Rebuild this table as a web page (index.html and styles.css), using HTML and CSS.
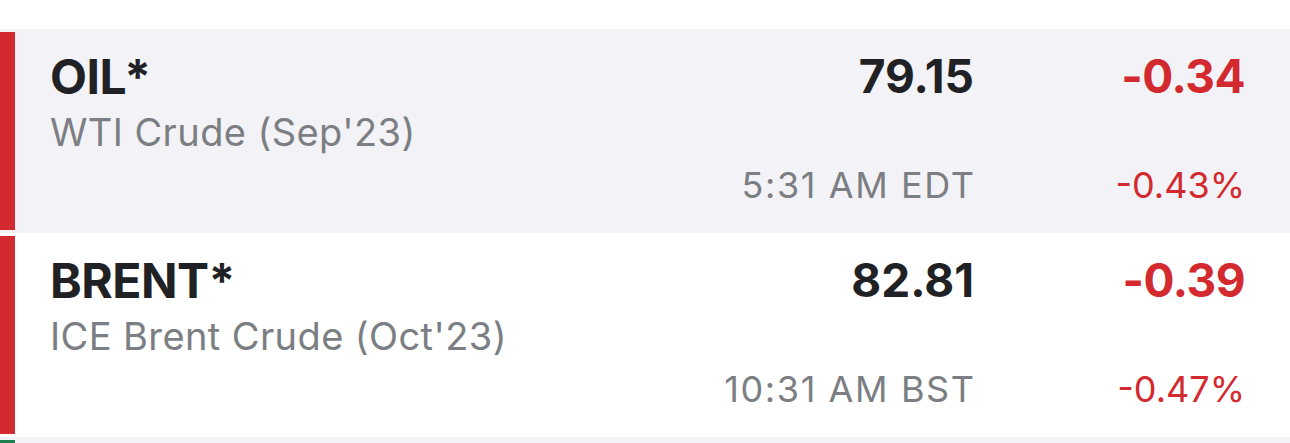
FILE: index.html
```html
<!DOCTYPE html>
<html>
<head>
<meta charset="utf-8">
<link rel="stylesheet" href="styles.css">
</head>
<body>
<div class="list">
  <div class="quote shaded">
    <div class="bar down"></div>
    <div class="body">
      <div class="names">
        <div class="sym">OIL*</div>
        <div class="desc">WTI Crude (Sep'23)</div>
      </div>
      <div class="col price">
        <div class="last">79.15</div>
        <div class="time">5:31 AM EDT</div>
      </div>
      <div class="col change">
        <div class="chg">-0.34</div>
        <div class="pct">-0.43%</div>
      </div>
    </div>
  </div>
  <div class="quote">
    <div class="bar down"></div>
    <div class="body">
      <div class="names">
        <div class="sym">BRENT*</div>
        <div class="desc">ICE Brent Crude (Oct'23)</div>
      </div>
      <div class="col price">
        <div class="last">82.81</div>
        <div class="time">10:31 AM BST</div>
      </div>
      <div class="col change">
        <div class="chg">-0.39</div>
        <div class="pct">-0.47%</div>
      </div>
    </div>
  </div>
  <div class="quote shaded peek">
    <div class="bar up"></div>
  </div>
</div>
</body>
</html>
```
FILE: styles.css
```css
html, body {
  margin: 0;
  padding: 0;
  background: #ffffff;
}
body {
  font-family: Inter, "Liberation Sans", sans-serif;
  width: 1290px;
  height: 443px;
  overflow: hidden;
}
.list {
  padding-top: 29px;
}
.quote {
  display: flex;
  height: 204px;
  background: #ffffff;
}
.quote.shaded {
  background: #f3f3f7;
}
.quote.peek {
  height: 6px;
}
.bar {
  width: 15px;
  margin: 3px 0;
  flex: none;
}
.peek .bar {
  margin-bottom: 0;
}
.bar.down { background: #d22a2f; }
.bar.up { background: #1e7f4e; }
.body {
  flex: 1;
  display: flex;
  padding: 24px 45px 0 35px;
}
.names {
  flex: 1;
}
.sym {
  font-size: 48px;
  line-height: 48px;
  font-weight: 700;
  letter-spacing: -0.5px;
  color: #1f2125;
}
.desc {
  margin-top: 12px;
  font-size: 38px;
  line-height: 38px;
  letter-spacing: 0.4px;
  color: #7b7e82;
}
.col {
  text-align: right;
}
.change {
  width: 271px;
}
.last, .chg {
  font-size: 46px;
  line-height: 46px;
  font-weight: 700;
  color: #1f2125;
}
.chg {
  color: #d22a2f;
  letter-spacing: -0.5px;
}
.time, .pct {
  margin-top: 68px;
  font-size: 36px;
  line-height: 36px;
  color: #7b7e82;
}
.time {
  letter-spacing: 1.6px;
  margin-right: -1.6px;
}
.pct {
  color: #d22a2f;
}
```
